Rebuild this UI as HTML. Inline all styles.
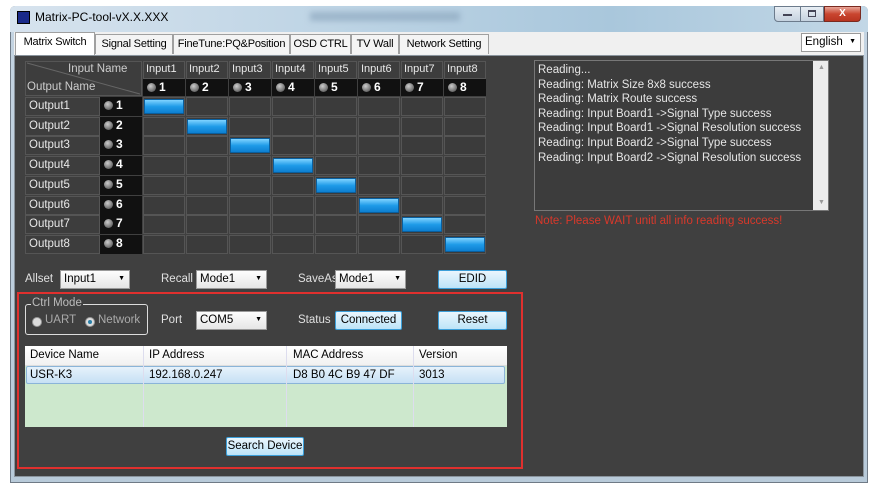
<!DOCTYPE html>
<html><head><style>
*{margin:0;padding:0;box-sizing:border-box}
body{width:876px;height:493px;background:#fff;position:relative;overflow:hidden;font-family:"Liberation Sans",sans-serif;font-size:11px;color:#000}
.a{position:absolute}
.win{left:10px;top:6px;width:858px;height:477px;border:1px solid #6f7a86;border-radius:5px 5px 0 0;background:linear-gradient(#c4d4e2,#b8cad9);}
.title{left:10px;top:6px;width:858px;height:26px;border-radius:5px 5px 0 0;background:linear-gradient(90deg,#d7e3ee 0%,#bcd3e4 40%,#a9c7dc 70%,#c2d7e6 100%)}
.dark{left:14px;top:55px;width:850px;height:422px;background:#404040;border:1px solid #8a949d}
.tabbar{left:14px;top:32px;width:850px;height:23px;background:#f0f0f0}
.tab{top:34px;height:20px;border:1px solid #a0a0a0;border-bottom:none;background:#f4f4f4;font-size:11px;letter-spacing:-0.2px;padding:3px 0;text-align:center;white-space:nowrap;overflow:hidden}
.cell{background:#3b3b3b;border:1px solid #555}
.lbl{color:#e8e8e8;font-size:11.5px}
.num{background:#111;color:#fff;font-weight:bold;font-size:12px}
.led{display:inline-block;width:9px;height:9px;border-radius:50%;background:radial-gradient(circle at 40% 35%,#ccc,#777 60%,#444);vertical-align:-1px;margin:0 3px 0 4px}
.bar{background:linear-gradient(#7fd3ff,#1f9be8 50%,#0d7fd0);border:1px solid #0a5f9e;border-radius:1px}
.combo{height:19px;background:linear-gradient(#fdfdfd,#e6e6e6);border:1px solid #9a9a9a;font-size:11.5px;padding:2px 3px}
.combo:after{content:"▼";position:absolute;right:4px;top:4px;font-size:7px}
.btn{height:19px;background:linear-gradient(#eaf6fd,#bde4f8);border:1px solid #3c9fd9;border-radius:2px;font-size:11.5px;text-align:center;padding-top:2px}
.w{color:#e0e0e0;font-size:11.5px}
</style></head><body>
<div class="a win"></div>
<div class="a title"></div>
<div class="a" style="left:17px;top:11px;width:13px;height:13px;background:#1a2a8a;border:1px solid #000"></div>
<div class="a" style="left:35px;top:10px;font-size:12px">Matrix-PC-tool-vX.X.XXX</div>
<div class="a" style="left:310px;top:12px;width:150px;height:9px;background:#8fa9c0;filter:blur(3px);opacity:.7"></div>
<div class="a" style="left:774px;top:6px;width:27px;height:16px;border:1px solid #6c7b8c;border-radius:0 0 0 4px;background:linear-gradient(#e8eef4,#c5d2df)"></div>
<div class="a" style="left:783px;top:14px;width:9px;height:2px;background:#445;"></div>
<div class="a" style="left:800px;top:6px;width:24px;height:16px;border:1px solid #6c7b8c;background:linear-gradient(#e8eef4,#c5d2df)"></div>
<div class="a" style="left:808px;top:10px;width:8px;height:7px;border:1px solid #445;border-top-width:2px"></div>
<div class="a" style="left:824px;top:6px;width:37px;height:16px;border:1px solid #7a2a20;border-radius:0 0 4px 0;background:linear-gradient(#e8a597,#c9452f 50%,#b83420);color:#fff;text-align:center;font-weight:bold;font-size:10px;line-height:14px">X</div>
<div class="a tabbar"></div>
<div class="a tab" style="left:15px;top:32px;height:23px;width:80px;background:#fff">Matrix Switch</div>
<div class="a tab" style="left:95px;width:78px">Signal Setting</div>
<div class="a tab" style="left:173px;width:117px">FineTune:PQ&amp;Position</div>
<div class="a tab" style="left:290px;width:61px">OSD CTRL</div>
<div class="a tab" style="left:351px;width:48px">TV Wall</div>
<div class="a tab" style="left:399px;width:90px">Network Setting</div>
<div class="a combo" style="left:801px;top:33px;width:60px;background:#fff">English</div>
<div class="a dark"></div>

<div class="a cell" style="left:25px;top:61px;width:117px;height:35px;background:#3d3d3d"></div>
<svg class="a" style="left:25px;top:61px" width="117" height="35"><line x1="2" y1="2" x2="115" y2="33" stroke="#666" stroke-width="1"/></svg>
<div class="a lbl" style="left:68px;top:63px;color:#ccc">Input Name</div>
<div class="a lbl" style="left:27px;top:81px;color:#ccc">Output Name</div>
<div id="g"></div>

<div class="a" style="left:534px;top:60px;width:295px;height:151px;background:#3c3c3c;border:1px solid #777"></div>
<div class="a" style="left:813px;top:61px;width:15px;height:149px;background:#ececec"></div>
<div class="a" style="left:818px;top:64px;font-size:7px;color:#999">▲</div>
<div class="a" style="left:818px;top:199px;font-size:7px;color:#999">▼</div>
<div class="a w" style="left:538px;top:63px;line-height:14.6px;color:#e6e6e6">Reading...<br>Reading: Matrix Size 8x8 success<br>Reading: Matrix Route success<br>Reading: Input Board1 -&gt;Signal Type success<br>Reading: Input Board1 -&gt;Signal Resolution success<br>Reading: Input Board2 -&gt;Signal Type success<br>Reading: Input Board2 -&gt;Signal Resolution success</div>
<div class="a" style="left:535px;top:215px;color:#d9382a;font-size:11.5px">Note: Please WAIT unitl all info reading success!</div>

<div class="a w" style="left:25px;top:273px">Allset</div>
<div class="a combo" style="left:60px;top:270px;width:70px">Input1</div>
<div class="a w" style="left:161px;top:273px">Recall</div>
<div class="a combo" style="left:196px;top:270px;width:71px">Mode1</div>
<div class="a w" style="left:298px;top:273px">SaveAs</div>
<div class="a combo" style="left:335px;top:270px;width:71px">Mode1</div>
<div class="a btn" style="left:438px;top:270px;width:69px">EDID</div>

<div class="a" style="left:17px;top:292px;width:506px;height:177px;border:2px solid #e0302e"></div>
<div class="a" style="left:25px;top:304px;width:123px;height:31px;border:1px solid #ddd;border-radius:3px"></div>
<div class="a w" style="left:31px;top:297px;background:#404040;padding:0 1px;color:#bbb">Ctrl Mode</div>
<div class="a" style="left:32px;top:317px;width:10px;height:10px;border-radius:50%;background:#ddd;border:1px solid #999"></div>
<div class="a w" style="left:45px;top:314px;color:#aaa">UART</div>
<div class="a" style="left:85px;top:317px;width:10px;height:10px;border-radius:50%;background:#ddd;border:1px solid #999"></div>
<div class="a" style="left:88px;top:320px;width:4px;height:4px;border-radius:50%;background:#2a7fa8"></div>
<div class="a w" style="left:98px;top:314px;color:#aaa">Network</div>
<div class="a w" style="left:161px;top:314px">Port</div>
<div class="a combo" style="left:196px;top:311px;width:71px">COM5</div>
<div class="a w" style="left:298px;top:314px">Status</div>
<div class="a btn" style="left:335px;top:311px;width:67px">Connected</div>
<div class="a btn" style="left:438px;top:311px;width:69px">Reset</div>

<div class="a" style="left:25px;top:346px;width:482px;height:81px;background:#cde8cd"></div>
<div class="a" style="left:25px;top:346px;width:482px;height:20px;background:linear-gradient(#fff,#f1f1f1);border-bottom:1px solid #ddd"></div>
<div class="a" style="left:26px;top:366px;width:479px;height:18px;background:linear-gradient(#e6f2fb,#c6e0f4);border:1px solid #8ab4d8;border-radius:2px"></div>
<div class="a" style="left:143px;top:346px;width:1px;height:81px;background:#dde"></div>
<div class="a" style="left:286px;top:346px;width:1px;height:81px;background:#dde"></div>
<div class="a" style="left:413px;top:346px;width:1px;height:81px;background:#dde"></div>
<div class="a" style="left:30px;top:349px;font-size:11.5px">Device Name</div>
<div class="a" style="left:149px;top:349px;font-size:11.5px">IP Address</div>
<div class="a" style="left:293px;top:349px;font-size:11.5px">MAC Address</div>
<div class="a" style="left:419px;top:349px;font-size:11.5px">Version</div>
<div class="a" style="left:30px;top:369px;font-size:11.5px">USR-K3</div>
<div class="a" style="left:149px;top:369px;font-size:11.5px">192.168.0.247</div>
<div class="a" style="left:293px;top:369px;font-size:11.5px">D8 B0 4C B9 47 DF</div>
<div class="a" style="left:419px;top:369px;font-size:11.5px">3013</div>
<div class="a btn" style="left:226px;top:437px;width:78px">Search Device</div>

<script>
var h='';
for(var i=0;i<8;i++){var x=143+i*43;
h+='<div class="a cell lbl" style="left:'+x+'px;top:61px;width:42px;height:18px;padding:1px 2px;font-size:11px;background:#3d3d3d">Input'+(i+1)+'</div>';
h+='<div class="a num" style="left:'+x+'px;top:79px;width:42px;height:17px;padding-top:1px"><span class="led"></span>'+(i+1)+'</div>';}
for(var r=0;r<8;r++){var y=97+r*19.7;
h+='<div class="a cell lbl" style="left:25px;top:'+y+'px;width:75px;height:19px;padding:2px 3px;background:#3d3d3d">Output'+(r+1)+'</div>';
h+='<div class="a num" style="left:100px;top:'+y+'px;width:42px;height:19px;padding-top:1px"><span class="led"></span>'+(r+1)+'</div>';
for(var c=0;c<8;c++){var x=143+c*43;
h+='<div class="a cell" style="left:'+x+'px;top:'+y+'px;width:42px;height:19px"></div>';
if(c==r)h+='<div class="a bar" style="left:'+(x+1)+'px;top:'+(y+2)+'px;width:40px;height:15px"></div>';}}
document.getElementById('g').innerHTML=h;
</script>
</body></html>
